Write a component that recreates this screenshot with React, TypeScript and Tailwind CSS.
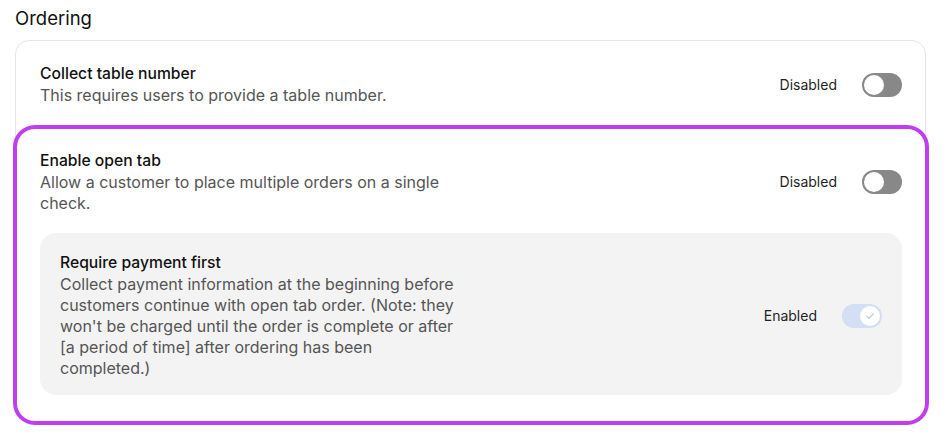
import React from "react";

function Toggle({ on }: { on?: boolean }) {
  if (on) {
    return (
      <div className="relative w-[40px] h-[24px] rounded-full bg-[#d4def4] shrink-0">
        <div className="absolute right-[2px] top-[2px] w-[20px] h-[20px] rounded-full bg-white flex items-center justify-center">
          <svg width="12" height="12" viewBox="0 0 12 12" fill="none">
            <path d="M2.8 6.2 L5 8.2 L9.2 3.9" stroke="#c2cdea" strokeWidth="1.4" strokeLinecap="round" strokeLinejoin="round" />
          </svg>
        </div>
      </div>
    );
  }
  return (
    <div className="relative w-[40px] h-[24px] rounded-full bg-[#888888] shrink-0">
      <div className="absolute left-[2px] top-[2px] w-[20px] h-[20px] rounded-full bg-white" />
    </div>
  );
}

function Status({ label, on }: { label: string; on?: boolean }) {
  return (
    <div className="flex items-center gap-[25px] shrink-0">
      <span className="text-[14px] leading-[20px] text-[#1f1f1f]">{label}</span>
      <Toggle on={on} />
    </div>
  );
}

export default function App() {
  return (
    <div className="w-[946px] h-[441px] bg-white px-[15px] pt-[6px] font-['Inter',sans-serif] overflow-hidden">
      <h2 className="text-[18.5px] leading-[24px] text-[#111] font-normal">Ordering</h2>
      <div className="mt-[10px] w-[911px] border border-[#e6e6e6] rounded-[14px]">
        <div className="flex items-center justify-between pl-[24px] pr-[23px] pt-[22px] pb-[23px]">
          <div>
            <div className="text-[15.7px] leading-[22px] font-medium text-[#111]">Collect table number</div>
            <div className="text-[16px] leading-[21px] text-[#555]">This requires users to provide a table number.</div>
          </div>
          <Status label="Disabled" />
        </div>
        <div className="ml-[1px] rounded-[18px] ring-4 ring-[#c03ef0] px-[23px] pt-[21px] pb-[26px]">
          <div className="flex items-center justify-between">
            <div className="w-[420px]">
              <div className="text-[15.7px] leading-[22px] font-medium text-[#111]">Enable open tab</div>
              <div className="text-[16px] leading-[21px] text-[#555]">
                Allow a customer to place multiple orders on a single check.
              </div>
            </div>
            <Status label="Disabled" />
          </div>
          <div className="mt-[19px] rounded-[16px] bg-[#f3f3f3] flex items-center justify-between pl-[20px] pr-[20px] pt-[19px] pb-[16px]">
            <div className="w-[398px]">
              <div className="text-[15.7px] leading-[22px] font-medium text-[#111]">Require payment first</div>
              <div className="text-[16px] leading-[21px] text-[#555]">
                Collect payment information at the beginning before customers continue with open tab order. (Note: they won't be charged until the order is complete or after [a period of time] after ordering has been completed.)
              </div>
            </div>
            <Status label="Enabled" on />
          </div>
        </div>
      </div>
    </div>
  );
}
